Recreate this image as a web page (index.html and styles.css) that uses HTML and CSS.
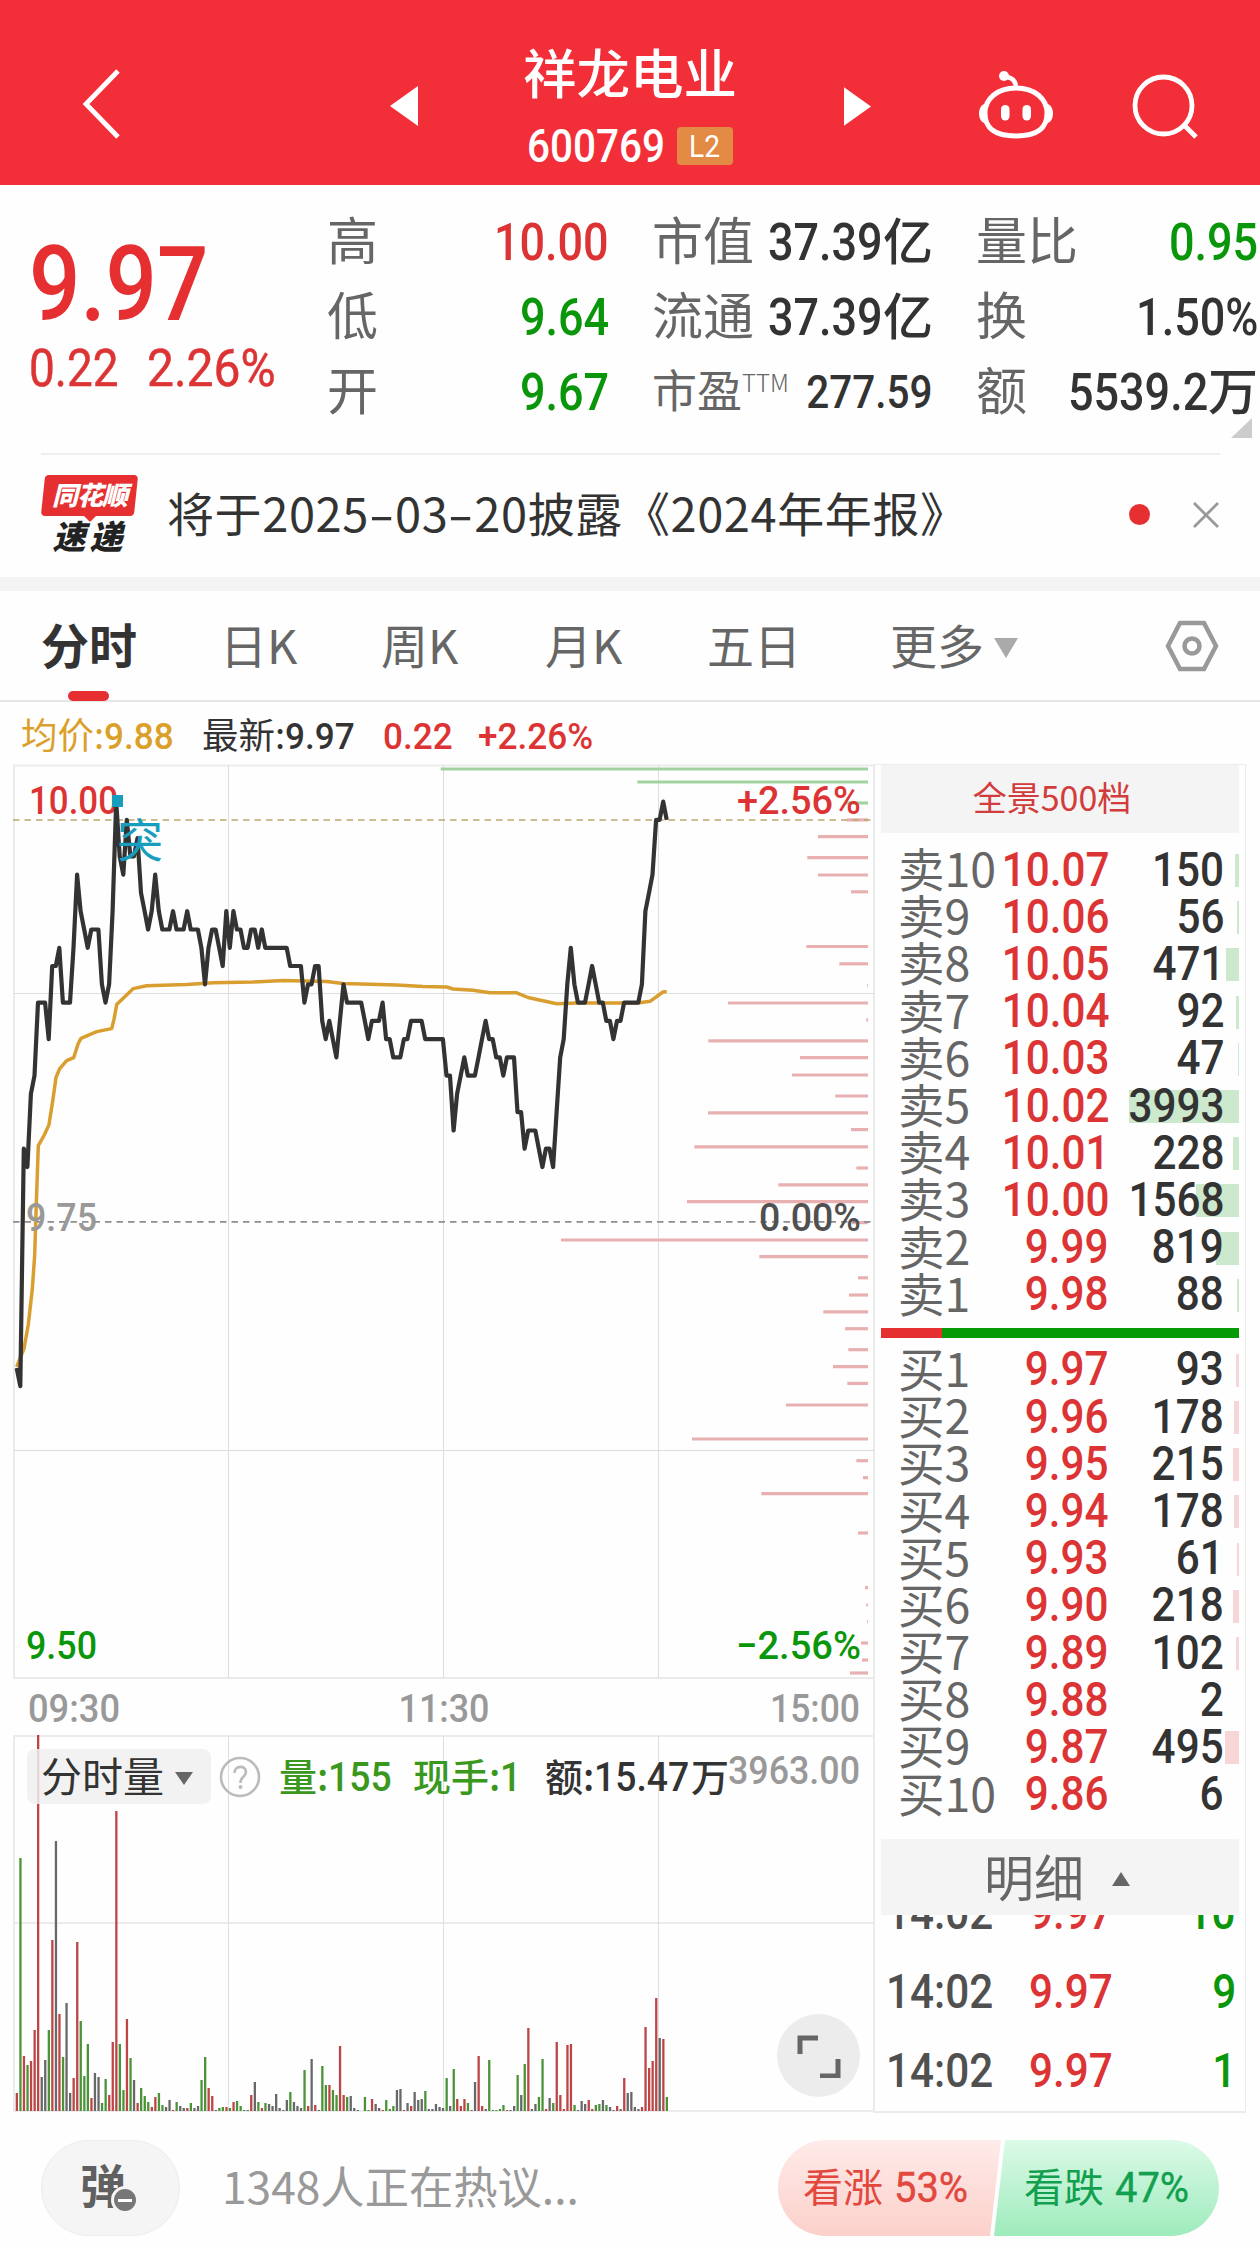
FILE: index.html
```html
<!DOCTYPE html>
<html lang="zh-CN">
<head>
    <meta charset="UTF-8">
    <meta name="viewport" content="width=device-width, initial-scale=1.0">
    <title>祥龙电业 600769</title>
    <link rel="stylesheet" href="styles.css">
</head>
<body>
    <header class="header">
        <svg class="back-icon" viewBox="0 0 44 76"><path d="M38 5 6 38 38 71"/></svg>
        <svg class="prev-icon" viewBox="0 0 28 40"><path d="M28 0v40L0 20z"/></svg>
        <div class="stock">
            <h1>祥龙电业</h1>
            <div class="stock-code">
                <span class="num">600769</span>
                <span class="badge"><span class="num">L2</span></span>
            </div>
        </div>
        <svg class="next-icon" viewBox="0 0 28 40"><path d="M0 0v40l28-20z"/></svg>
        <svg class="robot-icon" viewBox="0 0 80 70">
            <path d="M39 19c19 0 31 11 31 25S62 67 39 67 8 58 8 44s12-25 31-25z" fill="none" stroke="#fff" stroke-width="5"/>
            <path d="M39 19c0-6-3-10-9-11" fill="none" stroke="#fff" stroke-width="4.500"/>
            <circle cx="27" cy="7" r="5"/>
            <path d="M8 35c-8 1-8 18 0 19zM70 35c8 1 8 18 0 19z"/>
            <rect x="24" y="36" width="8.500" height="15.500" rx="4.200"/>
            <rect x="45.500" y="36" width="8.500" height="15.500" rx="4.200"/>
        </svg>
        <svg class="search-icon" viewBox="0 0 70 70"><circle cx="33.500" cy="33.500" r="28.500"/><path d="M54 53 66 65"/></svg>
    </header>

    <section class="quote">
        <div class="quote-price">
            <div class="price num">9.97</div>
            <div class="change"><span class="num">0.22</span><span class="num">2.26%</span></div>
        </div>
        <div class="quote-grid">
            <div><label>高</label><b class="num up">10.00</b></div>
            <div><label>市值</label><b class="num">37.39</b><i>亿</i></div>
            <div><label>量比</label><b class="num down">0.95</b></div>
            <div><label>低</label><b class="num down">9.64</b></div>
            <div><label>流通</label><b class="num">37.39</b><i>亿</i></div>
            <div><label>换</label><b class="num">1.50%</b></div>
            <div><label>开</label><b class="num down">9.67</b></div>
            <div class="pe"><label>市盈<sup>TTM</sup></label><b class="num">277.59</b></div>
            <div><label>额</label><b class="num">5539.2</b><i>万</i></div>
        </div>
        <span class="corner"></span>
    </section>

    <section class="news">
        <div class="news-logo">
            <div class="logo-top"><span>同花顺</span></div>
            <div class="logo-bottom">速递</div>
        </div>
        <p>将于2025<s>-</s>03<s>-</s>20披露《2024年年报》</p>
        <span class="dot"></span>
        <svg class="close-icon" viewBox="0 0 28 28"><path d="M2 2l24 24M26 2 2 26"/></svg>
    </section>

    <nav class="tabs">
        <a class="active">分时</a>
        <a>日K</a>
        <a>周K</a>
        <a>月K</a>
        <a>五日</a>
        <a>更多<span class="caret"></span></a>
        <svg class="setting-icon" viewBox="0 0 54 52"><path d="M15 3h24l12 23-12 23H15L3 26z"/><circle cx="27" cy="26" r="7.500"/></svg>
    </nav>

    <div class="legend">
        <span class="avg">均价:<b class="num">9.88</b></span>
        <span>最新:<b class="num">9.97</b></span>
        <span class="up"><b class="num">0.22</b></span>
        <span class="up"><b class="num">+2.26%</b></span>
    </div>

    <main class="board">
        <div class="charts">
            <svg id="chart" class="chart" viewBox="0 764 875 1350">
                <g class="grid">
                    <path d="M13 765.500H875M13 1678H875M14 765V1679M13 1736H875M13 1923H875M13 2111H875M14 1736V2112"/>
                    <path class="thin" d="M14 993.500H875M14 1450.500H875M228.500 765V1678M443.500 765V1678M658.500 765V1678M228.500 1736V2111M443.500 1736V2111M658.500 1736V2111"/>
                </g>
                <g id="profile"></g>
                <path class="dash-high" d="M13 820H872"/>
                <path class="dash-zero" d="M13 1221.800H872"/>
                <polyline class="avg-line" points="16.700,1367 24,1348.500 28.300,1324.500 32.300,1289 34.700,1255 36,1213 38.300,1145.600 44.300,1135 49,1124.600 53,1099 56,1077.500 59.700,1068.600 66.700,1060.600 73.700,1057.700 78.300,1043.300 81,1038.300 96.700,1031.600 111.700,1028.600 114,1019.400 116.700,1004.600 124,997.500 133.300,988.600 146.700,985.700 186.700,984.400 213,982.700 253,982 283,980.600 326.700,981.500 343,983.600 397,985 423,986.500 446.700,987 453,989 473,990.300 490,992.800 516.700,992.800 528,997.500 556.700,1003.800 576.700,1003 638,1003 650,1001.300 663,992 666.700,991.600"/>
                <g class="chart-text">
                    <text class="up" x="29" y="814" textLength="89">10.00</text>
                    <text class="up" x="861" y="814" text-anchor="end" textLength="124">+2.56%</text>
                    <text class="mute" x="26" y="1231" textLength="71">9.75</text>
                    <text class="dark" x="861" y="1231" text-anchor="end" textLength="102">0.00%</text>
                    <text class="down" x="26" y="1659" textLength="71">9.50</text>
                    <text class="down" x="861" y="1659" text-anchor="end" textLength="125">−2.56%</text>
                    <text class="mute" x="28" y="1722" textLength="92">09:30</text>
                    <text class="mute" x="444" y="1722" text-anchor="middle" textLength="91">11:30</text>
                    <text class="mute" x="860" y="1722" text-anchor="end" textLength="90">15:00</text>
                    <text class="mute" x="860" y="1784" text-anchor="end" textLength="132">3963.00</text>
                </g>
                <polyline id="price" class="price-line"/>
                <rect x="112" y="795" width="11" height="12" fill="#189dbd"/>
                <text class="mark" x="117" y="857">突</text>
                <g id="volume"></g>
            </svg>
            <div class="vol-bar">
                <span class="vol-select">分时量<span class="caret"></span></span>
                <svg class="help-icon" viewBox="0 0 42 42"><circle cx="21" cy="21" r="19"/><path d="M15.500 17c0-8 11.500-8 11.500-1 0 4.500-5.500 5-5.500 10v1"/><circle class="help-dot" cx="21.500" cy="31" r="2"/></svg>
                <span class="vol-item green">量:<b class="num">155</b></span>
                <span class="vol-item green">现手:<b class="num">1</b></span>
                <span class="vol-item">额:<b class="num">15.47</b>万</span>
            </div>
            <button class="expand">
                <svg viewBox="0 0 44 44"><path d="M3 20V4h18M23 42h18V25"/></svg>
            </button>
        </div>

        <aside class="depth">
            <div class="depth-title">全景500档</div>
            <div id="asks" class="book asks"></div>
            <div class="ratio"><span></span></div>
            <div id="bids" class="book bids"></div>
            <div class="detail-title">明细<span class="caret-up"></span></div>
            <div class="details">
                <div><b class="num">14:02</b><b class="num up">9.97</b><b class="num down">10</b></div>
                <div><b class="num">14:02</b><b class="num up">9.97</b><b class="num down">9</b></div>
                <div><b class="num">14:02</b><b class="num up">9.97</b><b class="num down">1</b></div>
            </div>
        </aside>
    </main>

    <footer class="footer">
        <div class="danmu">弹<span class="danmu-off"></span></div>
        <p>1348人正在热议...</p>
        <div class="vote">
            <div class="bull">看涨 <b class="num">53%</b></div>
            <div class="bear">看跌 <b class="num">47%</b></div>
        </div>
    </footer>

    <script>
        const STEP = 3.552;
        const START = 16.7;

        // minute prices, in cents from the previous close
        const prices = [
            -8, -9, 4, 3, 7, 8, 12, 12, 12, 10, 14, 14, 15, 12, 12, 12, 15, 19, 17, 16,
            15, 16, 16, 16, 13, 12, 13, 17, 23, 20, 19, 22, 20, 20, 21, 18, 17, 16, 17, 19,
            17, 16, 16, 16, 17, 16, 16, 16, 17, 16, 16, 16, 15, 13, 15, 16, 16, 15, 14, 17,
            15, 17, 16, 16, 15, 15, 16, 16, 15, 16, 15, 15, 15, 15, 15, 15, 15, 14, 14, 14,
            14, 12, 13, 13, 14, 14, 11, 10, 11, 10, 9, 11, 13, 12, 12, 12, 12, 12, 11, 10,
            11, 11, 11, 12, 10, 10, 9, 9, 9, 10, 10, 11, 11, 11, 11, 10, 10, 10, 10, 10,
            10, 8, 8, 5, 7, 8, 9, 8, 8, 8, 9, 10, 11, 10, 10, 9, 9, 8, 9, 9,
            9, 6, 6, 4, 5, 5, 5, 4, 3, 4, 4, 3, 6, 9, 10, 13, 15, 13, 12, 12,
            12, 13, 14, 13, 12, 12, 11, 11, 10, 11, 11, 12, 12, 12, 12, 12, 13, 17, 18, 19,
            22, 22, 23, 22
        ];
        document.getElementById('price').setAttribute('points',
            prices.map((p, i) => (START + i * STEP).toFixed(1) + ',' + (1221.8 - p * 18.27).toFixed(1)).join(' '));

        // minute volume: r = up, g = down, k = flat
        const volume = `r18 g253 r55 g46 r50 r81 r376 k34 k51 g81
            r171 k270 r97 g54 k108 k18 r33 r169 g90 g35
            g67 r13 k38 k34 g8 g32 r16 r69 r300 g67
            g21 r92 g53 k31 r8 g23 g15 g9 r4 r14
            g18 g6 k4 k11 r1 g9 k5 k3 r3 g8
            k3 k5 g31 g54 r23 r15 k1 g3 g4 r4
            g3 r9 g10 g5 g1 k1 r16 k29 g9 r3
            g8 k7 k5 k17 k3 k1 k11 g19 k9 k5
            k3 g41 r5 k52 r6 k1 g45 g26 r26 g21
            g16 r65 r16 g14 k15 k3 k1 k0 g14 g1
            r12 k7 k3 r1 g11 g2 g5 k21 k22 r1
            k8 r5 k19 k11 k12 g20 k2 k2 k7 k4
            k3 g33 k5 g42 r12 r5 r12 g8 k1 k29
            r55 r5 k2 g51 g1 g1 g2 g6 r1 k1
            k5 g36 k16 g47 r83 k2 k7 g14 g52 r2
            k13 g8 r69 r16 r2 r66 r67 g6 k1 k10
            k7 r11 r2 g6 g7 k11 g6 k4 k1 r5
            k2 r33 k18 k19 k4 k2 r4 r84 r43 r50
            r113 k73 r72 g14`.split(/\s+/);
        const volColor = { r: '#bd4545', g: '#4b9339', k: '#686868' };
        document.getElementById('volume').innerHTML = volume.map((v, i) => {
            const h = +v.slice(1);
            return `<rect x="${(START - 1 + i * STEP).toFixed(1)}" y="${2111 - h}" width="2.3" height="${h}" fill="${volColor[v[0]]}"/>`;
        }).join('');

        // traded volume by price: y, left edge
        const profile = [
            [769, 440.7], [782, 637.3], [803, 845], [819.9, 846.7], [836.7, 818], [857.7, 807.3],
            [875, 818], [891.8, 851], [946.5, 806.3], [963.8, 839.3], [985.7, 867.3], [1003, 728],
            [1019.8, 866.3], [1040.8, 708.3], [1057.7, 800], [1075, 792], [1096, 835.3], [1112.8, 708],
            [1129.6, 851], [1146.9, 694.3], [1168, 856.3], [1184.8, 778.3], [1201.6, 687], [1222.6, 851.7],
            [1240, 561], [1256.7, 759.3], [1277.8, 858], [1295, 849], [1311.9, 823.3], [1328.7, 845],
            [1349.7, 848.3], [1366.6, 833], [1383.4, 847.3], [1405, 786], [1439, 692], [1460.7, 856.3],
            [1477.7, 863], [1493.7, 761.3], [1533, 858], [1587.6, 865], [1605, 866.3], [1621.6, 867.2],
            [1643, 861], [1660, 862], [1673, 850]
        ];
        document.getElementById('profile').innerHTML = profile.map(([y, x], i) =>
            `<path d="M${x} ${y}H868" stroke="${i < 3 ? '#a1d3a1' : '#e9b0b1'}" stroke-width="3.2"/>`).join('');

        const asks = [['10.07', 150], ['10.06', 56], ['10.05', 471], ['10.04', 92], ['10.03', 47],
            ['10.02', 3993], ['10.01', 228], ['10.00', 1568], ['9.99', 819], ['9.98', 88]];
        const bids = [['9.97', 93], ['9.96', 178], ['9.95', 215], ['9.94', 178], ['9.93', 61],
            ['9.90', 218], ['9.89', 102], ['9.88', 2], ['9.87', 495], ['9.86', 6]];

        function renderBook(id, rows, label) {
            document.getElementById(id).innerHTML = rows.map(([price, vol], i) => `
                <div class="book-row">
                    <span class="bar" style="width:${Math.round(vol / 3993 * 110)}px"></span>
                    <label>${label(i)}</label>
                    <b class="num up">${price}</b>
                    <b class="num">${vol}</b>
                </div>`).join('');
        }
        renderBook('asks', asks, i => '卖' + (10 - i));
        renderBook('bids', bids, i => '买' + (i + 1));

        document.querySelectorAll('.chart-text text').forEach(t => t.setAttribute('lengthAdjust', 'spacingAndGlyphs'));
    </script>
</body>
</html>
```

FILE: styles.css
```css
* {
    margin: 0;
    padding: 0;
    box-sizing: border-box;
}

body {
    width: 1260px;
    height: 2248px;
    overflow: hidden;
    background: #fefefe;
    color: #333;
    font-family: 'Noto Sans CJK SC', sans-serif;
}

b,
i {
    font-weight: inherit;
    font-style: normal;
}

svg {
    display: block;
    flex: none;
}

/* narrow figures */
.num {
    display: inline-block;
    font-family: Roboto, sans-serif;
    font-weight: 500;
    transform: scaleX(0.88);
    transform-origin: left center;
}

.up {
    color: #dc3434;
    fill: #dc3434;
}

.down {
    color: #0a960a;
    fill: #0a960a;
}

/* header */
.header {
    height: 185px;
    background: #f22f38;
    color: #fff;
    display: flex;
    align-items: flex-start;
}

.header svg {
    fill: #fff;
}

.back-icon {
    width: 44px;
    height: 76px;
    margin: 66px 0 0 80px;
}

.header .back-icon,
.header .search-icon {
    fill: none;
    stroke: #fff;
    stroke-width: 4.8;
}

.prev-icon {
    width: 28px;
    height: 40px;
    margin: 86px 0 0 266px;
}

.next-icon {
    width: 27px;
    height: 39px;
    margin: 87px 0 0 109px;
}

.stock {
    width: 212px;
    margin: 40px 0 0 105px;
}

.stock h1 {
    font-size: 53.500px;
    line-height: 62px;
    font-weight: 500;
    white-space: nowrap;
}

.stock-code {
    display: flex;
    align-items: center;
    margin-top: 25px;
    padding-left: 4px;
    height: 38px;
}

.stock-code > .num {
    width: 149px;
    font-size: 46px;
    line-height: 38px;
}

.badge {
    width: 56px;
    height: 38px;
    margin-left: 1px;
    border-radius: 4px;
    background: #e38b44;
    text-align: center;
    line-height: 38px;
}

.badge .num {
    font-size: 32px;
    font-weight: 400;
    line-height: 38px;
    vertical-align: top;
    transform-origin: center;
}

.robot-icon {
    width: 80px;
    height: 70px;
    margin: 69px 0 0 106px;
}

.search-icon {
    width: 70px;
    height: 70px;
    margin: 72px 0 0 73px;
}

/* quote */
.quote {
    position: relative;
    height: 268px;
    display: flex;
}

.quote-price {
    width: 327px;
    padding: 40px 0 0 29px;
    color: #e62f30;
}

.price {
    font-size: 104px;
    line-height: 120px;
    transform: scaleX(0.87);
}

.change {
    display: flex;
    gap: 19px;
    margin-top: -6px;
    color: #dc3434;
}

.change .num {
    font-size: 51px;
    line-height: 60px;
    font-weight: 400;
    -webkit-text-stroke: 0.5px currentColor;
    transform: scaleX(0.9);
}

.change .num:last-child {
    transform: scaleX(0.94);
}

.quote-grid {
    display: grid;
    grid-template-columns: 282px 281px 282px;
    grid-auto-rows: 75px;
    column-gap: 43px;
    padding-top: 20px;
}

.quote-grid > div {
    display: flex;
    align-items: center;
    justify-content: flex-end;
    white-space: nowrap;
    line-height: 75px;
}

.quote-grid label,
.quote-grid i {
    position: relative;
    top: -4px;
}

.quote-grid label {
    margin-right: auto;
    color: #666;
    font-size: 51px;
    line-height: 75px;
}

.quote-grid .num {
    font-size: 52px;
    transform: scaleX(0.865);
    transform-origin: right center;
}

.quote-grid i {
    font-size: 50px;
    font-weight: 500;
}

.quote-grid .num:not(:last-child) {
    margin-left: -20px;
}

.quote-grid .pe label {
    font-size: 45px;
}

.pe sup {
    font-size: 24px;
    font-weight: 300;
    line-height: 0;
    vertical-align: 16px;
}

.quote-grid .pe .num {
    font-size: 46px;
    transform: scaleX(0.88);
}

.corner {
    position: absolute;
    right: 8px;
    bottom: 15px;
    border-left: 21px solid transparent;
    border-bottom: 20px solid #ccc;
}

/* news */
.news {
    height: 124px;
    margin: 0 40px 0 41px;
    border-top: 2px solid #efefef;
    display: flex;
    align-items: flex-start;
}

.news-logo {
    width: 97px;
    margin-top: 20px;
    text-align: center;
    font-weight: 900;
    font-style: italic;
}

.logo-top {
    position: relative;
    height: 41px;
}

.logo-top::before {
    content: '';
    position: absolute;
    inset: 0 2px;
    border-radius: 4px;
    background: #e62f30;
    transform: skewX(-6deg);
}

.logo-top::after {
    content: '';
    position: absolute;
    left: 42px;
    top: 40px;
    border: 7px solid transparent;
    border-top-color: #e62f30;
    border-bottom: 0;
}

.logo-top span {
    position: relative;
    color: #fff;
    font-size: 26px;
    line-height: 38px;
    letter-spacing: -1px;
}

.logo-bottom {
    margin: 2px 0 0;
    color: #222;
    font-size: 33px;
    line-height: 34px;
    letter-spacing: 4px;
}

.news p {
    margin: 22px 0 0 29px;
    font-size: 47px;
    line-height: 70px;
    letter-spacing: 0.6px;
    white-space: nowrap;
}

.news s {
    display: inline-block;
    width: 26px;
    text-align: center;
    text-decoration: none;
    transform: scaleX(1.6);
}

.dot {
    width: 21px;
    height: 21px;
    margin: 49px 42px 0 auto;
    border-radius: 50%;
    background: #e62f30;
}

.close-icon {
    width: 28px;
    height: 28px;
    margin-top: 46px;
    stroke: #999;
    stroke-width: 2.8;
}

/* tabs */
.tabs {
    position: relative;
    height: 125px;
    border-top: 14px solid #f4f4f4;
    border-bottom: 2px solid #e6e6e6;
    display: flex;
    align-items: center;
    padding-left: 41px;
}

.tabs a {
    position: relative;
    height: 109px;
    color: #666;
    font-size: 47px;
    line-height: 105px;
    white-space: nowrap;
}

.tabs a:nth-child(1) { width: 179px; }
.tabs a:nth-child(2) { width: 161px; }
.tabs a:nth-child(3) { width: 164px; }
.tabs a:nth-child(4) { width: 162px; }
.tabs a:nth-child(5) { width: 183px; }

.tabs .active {
    color: #333;
    font-size: 48px;
    font-weight: 700;
}

.active::after {
    content: '';
    position: absolute;
    left: 27px;
    bottom: -1px;
    width: 41px;
    height: 10px;
    border-radius: 5px;
    background: #e62f30;
}

.tabs .caret {
    display: inline-block;
    margin-left: 10px;
    vertical-align: 6px;
    border: 12px solid transparent;
    border-top: 20px solid #aaa;
    border-bottom: 0;
}

.setting-icon {
    width: 54px;
    height: 52px;
    margin: 0 41px 0 auto;
    fill: none;
    stroke: #999;
    stroke-width: 4.5;
}

/* legend above the chart */
.legend {
    height: 62px;
    padding-left: 21px;
    display: flex;
    font-size: 36.500px;
    line-height: 64px;
}

.legend .num {
    font-size: 37px;
    transform: scaleX(0.95);
}

.legend span:nth-child(1) { width: 181px; }
.legend span:nth-child(2) { width: 181px; }
.legend span:nth-child(3) { width: 95px; }

.avg {
    color: #dba02a;
}

/* board */
.board {
    display: flex;
    height: 1350px;
}

.charts {
    position: relative;
    width: 873px;
}

.chart {
    width: 875px;
    height: 1350px;
}

.grid path {
    stroke: #ebebeb;
    stroke-width: 2;
}

.grid .thin {
    stroke: #dedede;
    stroke-width: 1;
}

.dash-high,
.dash-zero {
    stroke: #bba66f;
    stroke-width: 1.7;
    stroke-dasharray: 6.5 5;
}

.dash-zero {
    stroke: #8f8f8f;
}

.avg-line,
.price-line {
    fill: none;
    stroke: #d99e30;
    stroke-width: 3.5;
    stroke-linejoin: round;
}

.price-line {
    stroke: #333;
    stroke-width: 4.2;
}

.chart-text text {
    font: 500 39.500px Roboto, sans-serif;
}

.mute {
    fill: #999;
}

.dark {
    fill: #505050;
}

.mark {
    font-size: 46px;
    fill: #189dbd;
}

.vol-bar {
    position: absolute;
    left: 27px;
    top: 985px;
    height: 55px;
    display: flex;
    align-items: center;
    white-space: nowrap;
}

.vol-select {
    width: 184px;
    height: 55px;
    padding-left: 14px;
    border-radius: 8px;
    background: rgba(240, 240, 240, 0.85);
    font-size: 41px;
    line-height: 51px;
}

.vol-select .caret {
    display: inline-block;
    margin-left: 11px;
    vertical-align: 7px;
    border: 9.5px solid transparent;
    border-top: 13px solid #666;
    border-bottom: 0;
}

.help-icon {
    width: 42px;
    height: 42px;
    margin: 0 18px 0 8px;
    fill: none;
    stroke: #bbb;
    stroke-width: 2.6;
}

.help-icon .help-dot {
    fill: #bbb;
    stroke: none;
}

.vol-item {
    height: 55px;
    font-size: 38px;
    line-height: 52px;
    font-weight: 500;
}

.vol-item .num {
    font-size: 41px;
    transform: scaleX(0.91);
}

.vol-item:nth-child(3) { width: 134px; }
.vol-item:nth-child(4) { width: 132px; }
.vol-item:nth-child(5) .num { margin-right: -8px; }

.green {
    color: #3a981f;
}

.expand {
    position: absolute;
    left: 777px;
    top: 1250px;
    width: 83px;
    height: 83px;
    border: 0;
    border-radius: 50%;
    background: #ececec;
}

.expand svg {
    width: 44px;
    height: 44px;
    margin: 0 auto;
    fill: none;
    stroke: #666;
    stroke-width: 5;
}

/* order book */
.depth {
    width: 373px;
    height: 1349px;
    padding: 0 6px 0 6px;
    border: 2px solid #ebebeb;
    border-width: 1px 1px 2px 2px;
    background: #fefefe;
    overflow: hidden;
}

.depth-title {
    height: 68px;
    padding-right: 16px;
    background: #f4f4f4;
    color: #d23c3c;
    text-align: center;
    font-size: 34px;
    line-height: 64px;
}

.book {
    padding-top: 13px;
}

.bids {
    padding-top: 8px;
}

.book-row {
    position: relative;
    height: 47.200px;
    padding: 0 15px 0 17px;
    display: flex;
    align-items: center;
    line-height: 47px;
}

.book-row label {
    width: 89px;
    height: 47px;
    color: #666;
    font-size: 46.500px;
    line-height: 42px;
    white-space: nowrap;
}

.book-row .num {
    position: relative;
    top: -0.5px;
    width: 122px;
    font-size: 48px;
    text-align: right;
    white-space: nowrap;
    transform-origin: right center;
}

.book-row .num:last-child {
    width: 116px;
}

.book-row .bar {
    position: absolute;
    right: 0;
    top: 8px;
    height: 33px;
    background: #cde9cd;
}

.bids .bar {
    background: #f6d6d6;
}

.ratio {
    height: 10px;
    margin-top: 10px;
    background: #079a07;
}

.ratio span {
    display: block;
    width: 61px;
    height: 10px;
    background: #e62f30;
}

.detail-title {
    height: 76px;
    margin-top: 21px;
    padding-left: 103px;
    background: #f4f4f4;
    color: #666;
    font-size: 50px;
    line-height: 72px;
}

.caret-up {
    display: inline-block;
    margin-left: 28px;
    vertical-align: 11px;
    border: 9.5px solid transparent;
    border-bottom: 14px solid #666;
    border-top: 0;
}

.details {
    height: 196px;
    overflow: hidden;
}

.details > div {
    display: flex;
    height: 79px;
    padding: 0 3px 0 5px;
    line-height: 79px;
}

.details > div:first-child {
    margin-top: -42px;
}

.details .num {
    width: 143px;
    color: #505050;
    font-size: 48px;
}

.details .num.up {
    width: 92px;
    color: #dc3434;
}

.details .num.down {
    width: auto;
    margin-left: auto;
    color: #0a960a;
    transform-origin: right center;
}

/* footer */
.footer {
    display: flex;
    align-items: center;
    height: 96px;
    margin: 26px 41px 0;
    white-space: nowrap;
}

.danmu {
    position: relative;
    width: 139px;
    height: 96px;
    padding-left: 38px;
    border: 1px solid #ececec;
    border-radius: 48px;
    background: #f5f5f5;
    color: #606060;
    font-size: 46px;
    font-weight: 700;
    line-height: 84px;
}

.danmu-off {
    position: absolute;
    left: 69px;
    top: 45px;
    width: 28px;
    height: 28px;
    border: 3px solid #f5f5f5;
    border-radius: 50%;
    background: linear-gradient(#fff, #fff) center / 14px 3px no-repeat, #777;
}

.footer p {
    height: 96px;
    margin-left: 42px;
    color: #999;
    font-size: 44.300px;
    line-height: 91px;
}

.vote {
    display: flex;
    width: 441px;
    height: 96px;
    margin-left: auto;
    border-radius: 48px;
    overflow: hidden;
    font-size: 40px;
    line-height: 90px;
}

.vote .num {
    margin-left: 2px;
    font-size: 42px;
    font-weight: 400;
    -webkit-text-stroke: 0.4px currentColor;
    transform: scaleX(0.95);
}

.bull {
    width: 225px;
    padding-left: 25px;
    color: #e2483e;
    background: linear-gradient(#feebe9, #fcd0ca);
    clip-path: polygon(0 0, 223px 0, 212px 100%, 0 100%);
}

.bear {
    width: 227px;
    margin-left: -11px;
    padding-left: 32px;
    color: #12a050;
    background: linear-gradient(#dcfae8, #9eebbc);
    clip-path: polygon(13px 0, 100% 0, 100% 100%, 2px 100%);
}
```
